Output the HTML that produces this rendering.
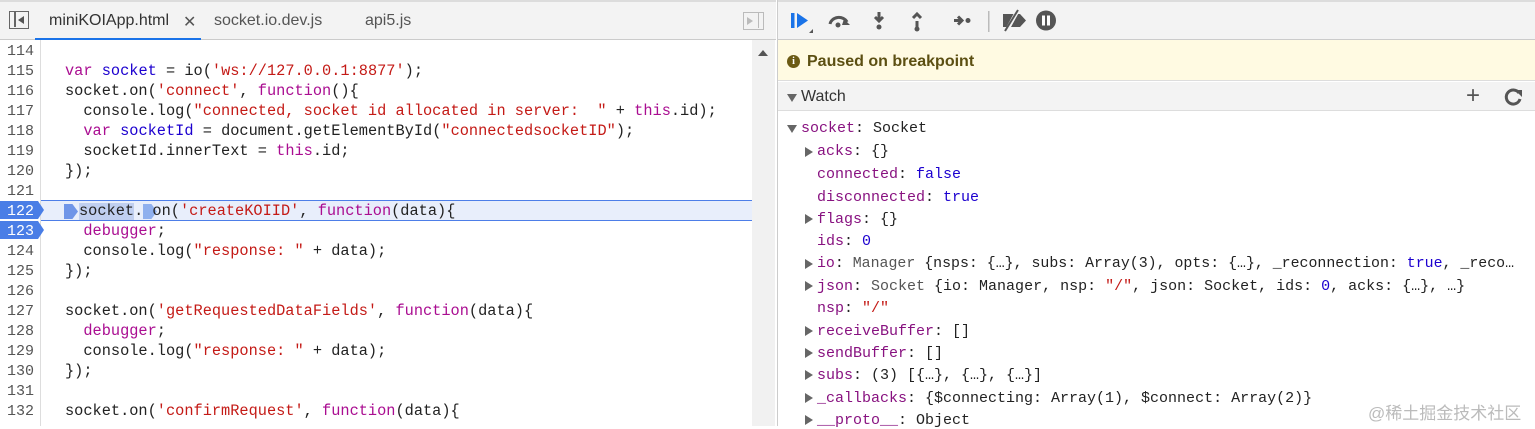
<!DOCTYPE html>
<html><head><meta charset="utf-8"><style>
*{margin:0;padding:0;box-sizing:border-box}
body{width:1535px;height:426px;overflow:hidden;background:#fff;font-family:"Liberation Sans",sans-serif;position:relative}
#left{position:absolute;left:0;top:0;width:776px;height:426px}
#tabs{position:absolute;left:0;top:0;width:776px;height:40px;background:#f3f3f3;border-top:2px solid #dcdcdc;border-bottom:1px solid #cbcbcb}
.tab{position:absolute;top:10px;font-size:16px;color:#333}
#code{position:absolute;left:0;top:40px;width:752px;height:386px;overflow:hidden}
.ln{position:absolute;left:0;width:34px;text-align:right;font-size:15px;color:#555;font-family:"Liberation Mono",monospace;margin-top:3px}
.cl{position:absolute;left:65px;font-size:15.3px;white-space:pre;color:#222;font-family:"Liberation Mono",monospace;margin-top:2px}
.k{color:#aa0d91}.s{color:#c41a16}.v{color:#1c00cf}
#scroll{position:absolute;left:752px;top:40px;width:23px;height:386px;background:#f1f1f1}
#right{position:absolute;left:777px;top:0;width:758px;height:426px;border-left:1px solid #ccc}
.w{position:absolute;font-size:15px;white-space:pre;font-family:"Liberation Mono",monospace;color:#222;margin-top:2px}
.p{color:#881280}.g{color:#555}
.tri{position:absolute;width:0;height:0;border-top:5px solid transparent;border-bottom:5px solid transparent;border-left:8px solid #666;margin-top:1px}
</style></head><body>
<div id="left">
<div id="tabs">
 <div style="position:absolute;left:9px;top:9px;width:20px;height:18px;border:1.5px solid #666;"><div style="position:absolute;left:4px;top:0;width:1.5px;height:15px;background:#666"></div><div style="position:absolute;left:8px;top:4px;border-top:4px solid transparent;border-bottom:4px solid transparent;border-right:6px solid #555"></div></div>
 <div class="tab" style="left:49px">miniKOIApp.html</div>
 <div class="tab" style="left:183px;color:#555">✕</div>
 <div style="position:absolute;left:35px;top:36px;width:166px;height:2px;background:#1a73e8"></div>
 <div class="tab" style="left:214px;color:#555">socket.io.dev.js</div>
 <div class="tab" style="left:365px;color:#555">api5.js</div>
 <div style="position:absolute;left:743px;top:10px;width:21px;height:18px;border:1.5px solid #bbb;"><div style="position:absolute;right:4px;top:0;width:1.5px;height:15px;background:#bbb"></div><div style="position:absolute;left:3px;top:4px;border-top:4px solid transparent;border-bottom:4px solid transparent;border-left:6px solid #bbb"></div></div>
</div>
<div id="code">
 <div style="position:absolute;left:40px;top:0;width:1px;height:386px;background:#ddd"></div>
 <div style="position:absolute;left:41px;top:160px;width:711px;height:21px;background:#e8eefb;border-top:1px solid #4d7ee8;border-bottom:1px solid #4d7ee8"></div>
 <svg style="position:absolute;left:0;top:160px" width="45" height="42"><path d="M0 1H38L44 10L38 19H0Z" fill="#4a7ee6"/><path d="M0 21H38L44 30L38 39H0Z" fill="#4a7ee6"/></svg>
 <div style="position:absolute;left:64px;top:164px;width:14px;height:15px;background:#6f95e8;clip-path:polygon(0 0,60% 0,100% 50%,60% 100%,0 100%)"></div>
 <div style="position:absolute;left:79px;top:163px;width:55px;height:17px;background:#c0cff0"></div>
 <div style="position:absolute;left:143px;top:164px;width:14px;height:15px;background:#8fb0ee;clip-path:polygon(0 0,60% 0,100% 50%,60% 100%,0 100%)"></div>
 <div class="ln" style="top:0">114</div>
 <div class="ln" style="top:20px">115</div><div class="cl" style="top:20px"><span class="k">var</span> <span class="v">socket</span> = io(<span class="s">'ws://127.0.0.1:8877'</span>);</div>
 <div class="ln" style="top:40px">116</div><div class="cl" style="top:40px">socket.on(<span class="s">'connect'</span>, <span class="k">function</span>(){</div>
 <div class="ln" style="top:60px">117</div><div class="cl" style="top:60px">  console.log(<span class="s">"connected, socket id allocated in server:  "</span> + <span class="k">this</span>.id);</div>
 <div class="ln" style="top:80px">118</div><div class="cl" style="top:80px">  <span class="k">var</span> <span class="v">socketId</span> = document.getElementById(<span class="s">"connectedsocketID"</span>);</div>
 <div class="ln" style="top:100px">119</div><div class="cl" style="top:100px">  socketId.innerText = <span class="k">this</span>.id;</div>
 <div class="ln" style="top:120px">120</div><div class="cl" style="top:120px">});</div>
 <div class="ln" style="top:140px">121</div>
 <div class="ln" style="top:160px;color:#fff">122</div><div class="cl" style="top:160px;left:79px">socket. on(<span class="s">'createKOIID'</span>, <span class="k">function</span>(data){</div>
 <div class="ln" style="top:180px;color:#fff">123</div><div class="cl" style="top:180px">  <span class="k">debugger</span>;</div>
 <div class="ln" style="top:200px">124</div><div class="cl" style="top:200px">  console.log(<span class="s">"response: "</span> + data);</div>
 <div class="ln" style="top:220px">125</div><div class="cl" style="top:220px">});</div>
 <div class="ln" style="top:240px">126</div>
 <div class="ln" style="top:260px">127</div><div class="cl" style="top:260px">socket.on(<span class="s">'getRequestedDataFields'</span>, <span class="k">function</span>(data){</div>
 <div class="ln" style="top:280px">128</div><div class="cl" style="top:280px">  <span class="k">debugger</span>;</div>
 <div class="ln" style="top:300px">129</div><div class="cl" style="top:300px">  console.log(<span class="s">"response: "</span> + data);</div>
 <div class="ln" style="top:320px">130</div><div class="cl" style="top:320px">});</div>
 <div class="ln" style="top:340px">131</div>
 <div class="ln" style="top:360px">132</div><div class="cl" style="top:360px">socket.on(<span class="s">'confirmRequest'</span>, <span class="k">function</span>(data){</div>
</div>
<div id="scroll"><div style="position:absolute;left:6px;top:10px;border-left:5px solid transparent;border-right:5px solid transparent;border-bottom:6px solid #555"></div></div>
</div>
<div id="right">
 <div style="position:absolute;left:0;top:0;width:758px;height:40px;background:#f3f3f3;border-top:2px solid #dcdcdc;border-bottom:1px solid #cbcbcb"></div>
 <svg style="position:absolute;left:0;top:0" width="300" height="40">
  <rect x="13" y="13" width="3.5" height="15" fill="#1a73e8"/><path d="M19 13L30 20.5L19 28Z" fill="#1a73e8"/><path d="M31 33L35 29V33Z" fill="#555"/>
  <path d="M52 24A9 8 0 0 1 69 22" stroke="#555" stroke-width="3" fill="none"/><path d="M66 19L72 25L64 25Z" fill="#555"/><circle cx="60" cy="25" r="2.5" fill="#555"/>
  <path d="M101 12V20M97 17L101 21L105 17" stroke="#555" stroke-width="3" fill="none"/><circle cx="101" cy="27" r="2.5" fill="#555"/>
  <path d="M139 29V21M135 18L139 14L143 18" stroke="#555" stroke-width="3" fill="none"/><circle cx="139" cy="29" r="2.5" fill="#555"/>
  <path d="M176 20.5H183M180 16.5L184 20.5L180 24.5" stroke="#555" stroke-width="3" fill="none"/><circle cx="190" cy="20.5" r="2.5" fill="#555"/>
  <rect x="210" y="11" width="1.5" height="21" fill="#bbb"/>
  <path d="M225 14H242L248 20.5L242 27H225Z" fill="#555"/><path d="M228 32L240 10" stroke="#f3f3f3" stroke-width="4"/><path d="M227 31L240 10" stroke="#555" stroke-width="2"/>
  <circle cx="268" cy="20.5" r="10" fill="#555"/><rect x="264" y="15.5" width="3" height="10" fill="#fff"/><rect x="269" y="15.5" width="3" height="10" fill="#fff"/>
 </svg>
 <div style="position:absolute;left:0;top:40px;width:758px;height:41px;background:#fffae2;border-bottom:1px solid #ddd"></div>
 <div style="position:absolute;left:9px;top:55px;width:13px;height:13px;border-radius:50%;background:#6b5a14;color:#fff;font:bold 10px 'Liberation Serif',serif;text-align:center;line-height:13px">i</div>
 <div style="position:absolute;left:29px;top:53px;font-size:16px;font-weight:bold;color:#5c4f12">Paused on breakpoint</div>
 <div style="position:absolute;left:0;top:82px;width:758px;height:29px;background:#f3f3f3;border-bottom:1px solid #ddd"></div>
 <div style="position:absolute;left:9px;top:94px;border-left:5px solid transparent;border-right:5px solid transparent;border-top:8px solid #666"></div>
 <div style="position:absolute;left:23px;top:88px;font-size:16px;color:#333">Watch</div>
 <div style="position:absolute;left:688px;top:82px;font-size:24px;color:#555;line-height:28px">+</div>
 <svg style="position:absolute;left:726px;top:87px" width="20" height="20"><path d="M15 6A7 7 0 1 0 16 12" stroke="#555" stroke-width="3" fill="none"/><path d="M11 3H18V10Z" fill="#555"/></svg>
 <div style="position:absolute;left:9px;top:125px;border-left:5px solid transparent;border-right:5px solid transparent;border-top:8px solid #666"></div>
 <div class="w" style="left:23px;top:118px"><span class="p">socket</span>: Socket</div>
 <div class="tri" style="left:27px;top:146px"></div><div class="w" style="left:39px;top:141px"><span class="p">acks</span>: {}</div>
 <div class="w" style="left:39px;top:164px"><span class="p">connected</span>: <span class="v">false</span></div>
 <div class="w" style="left:39px;top:187px"><span class="p">disconnected</span>: <span class="v">true</span></div>
 <div class="tri" style="left:27px;top:213px"></div><div class="w" style="left:39px;top:209px"><span class="p">flags</span>: {}</div>
 <div class="w" style="left:39px;top:231px"><span class="p">ids</span>: <span class="v">0</span></div>
 <div class="tri" style="left:27px;top:258px"></div><div class="w" style="left:39px;top:254px;font-size:14.9px"><span class="p">io</span>: <span class="g">Manager</span> {nsps: {…}, subs: Array(3), opts: {…}, _reconnection: <span class="v">true</span>, _reco…</div>
 <div class="tri" style="left:27px;top:280px"></div><div class="w" style="left:39px;top:276px"><span class="p">json</span>: <span class="g">Socket</span> {io: Manager, nsp: <span class="s">"/"</span>, json: Socket, ids: <span class="v">0</span>, acks: {…}, …}</div>
 <div class="w" style="left:39px;top:298px"><span class="p">nsp</span>: <span class="s">"/"</span></div>
 <div class="tri" style="left:27px;top:325px"></div><div class="w" style="left:39px;top:321px"><span class="p">receiveBuffer</span>: []</div>
 <div class="tri" style="left:27px;top:347px"></div><div class="w" style="left:39px;top:343px"><span class="p">sendBuffer</span>: []</div>
 <div class="tri" style="left:27px;top:369px"></div><div class="w" style="left:39px;top:365px"><span class="p">subs</span>: (3) [{…}, {…}, {…}]</div>
 <div class="tri" style="left:27px;top:392px"></div><div class="w" style="left:39px;top:388px"><span class="p">_callbacks</span>: {$connecting: Array(1), $connect: Array(2)}</div>
 <div class="tri" style="left:27px;top:414px"></div><div class="w" style="left:39px;top:410px"><span class="p">__proto__</span>: Object</div>
 <div style="position:absolute;left:590px;top:399px;font-size:17px;color:#bbb;font-family:'Liberation Sans','Noto Sans CJK SC',sans-serif">@稀土掘金技术社区</div>
</div>
</body></html>
